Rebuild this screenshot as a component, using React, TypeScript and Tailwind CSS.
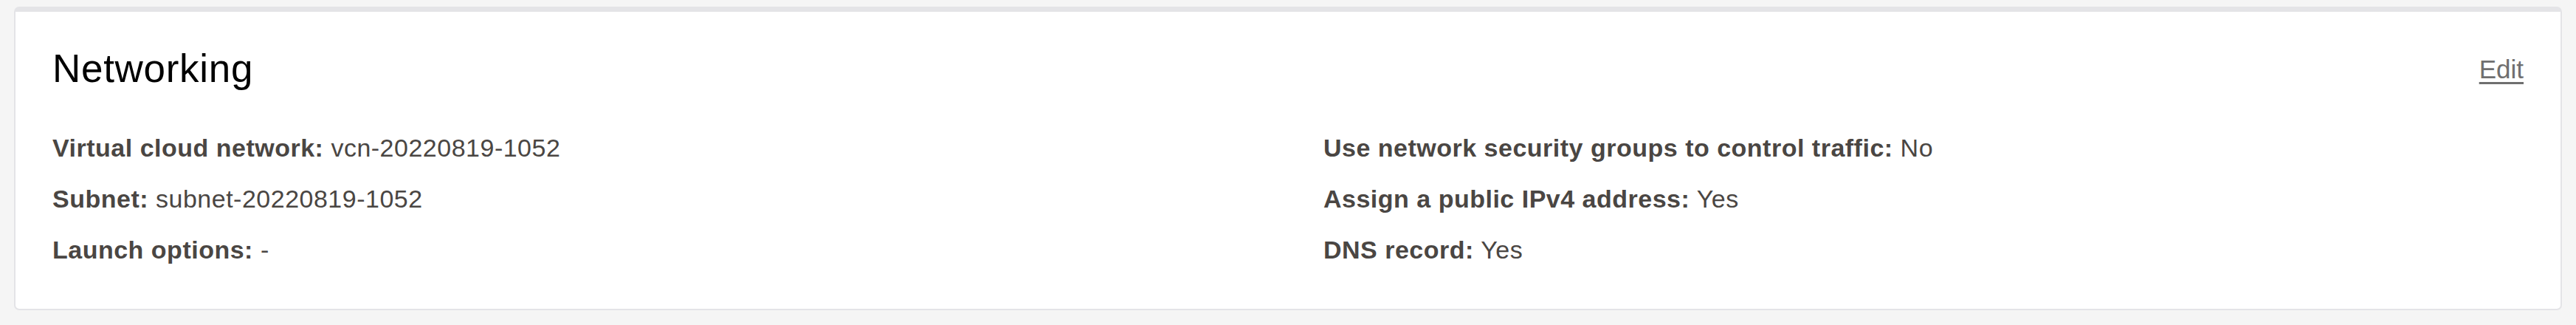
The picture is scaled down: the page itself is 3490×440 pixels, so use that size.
const left = [
  { label: "Virtual cloud network:", value: "vcn-20220819-1052" },
  { label: "Subnet:", value: "subnet-20220819-1052" },
  { label: "Launch options:", value: "-" },
];

const right = [
  { label: "Use network security groups to control traffic:", value: "No" },
  { label: "Assign a public IPv4 address:", value: "Yes" },
  { label: "DNS record:", value: "Yes" },
];

function Field({ label, value }: { label: string; value: string }) {
  return (
    <div className="text-[34px] leading-[40px] tracking-[0.5px] text-[#4a4643] whitespace-nowrap">
      <span className="font-bold">{label}</span> {value}
    </div>
  );
}

export default function App() {
  return (
    <div
      className="min-h-[440px] bg-[#f5f5f5] px-[19px] pt-[9px] pb-[18px]"
      style={{ fontFamily: '"Liberation Sans", Arial, sans-serif' }}
    >
      <div className="bg-white border-2 border-t-[7px] border-[#e4e4e7] rounded-[7px] pl-[50px] pr-[50px] pt-[47px] pb-[60px]">
        <div className="flex justify-between items-start">
          <h2 className="text-[53px] leading-[60px] tracking-[0.7px] text-black font-normal">Networking</h2>
          <a
            href="#"
            className="mt-[11px] text-[35px] leading-[40px] text-[#6f6f6f] underline underline-offset-[5px] decoration-[3px]"
          >
            Edit
          </a>
        </div>
        <div className="grid grid-cols-2 gap-x-[96px] mt-[57px]">
          <div className="flex flex-col gap-y-[29px]">
            {left.map((f) => (
              <Field key={f.label} {...f} />
            ))}
          </div>
          <div className="flex flex-col gap-y-[29px]">
            {right.map((f) => (
              <Field key={f.label} {...f} />
            ))}
          </div>
        </div>
      </div>
    </div>
  );
}
